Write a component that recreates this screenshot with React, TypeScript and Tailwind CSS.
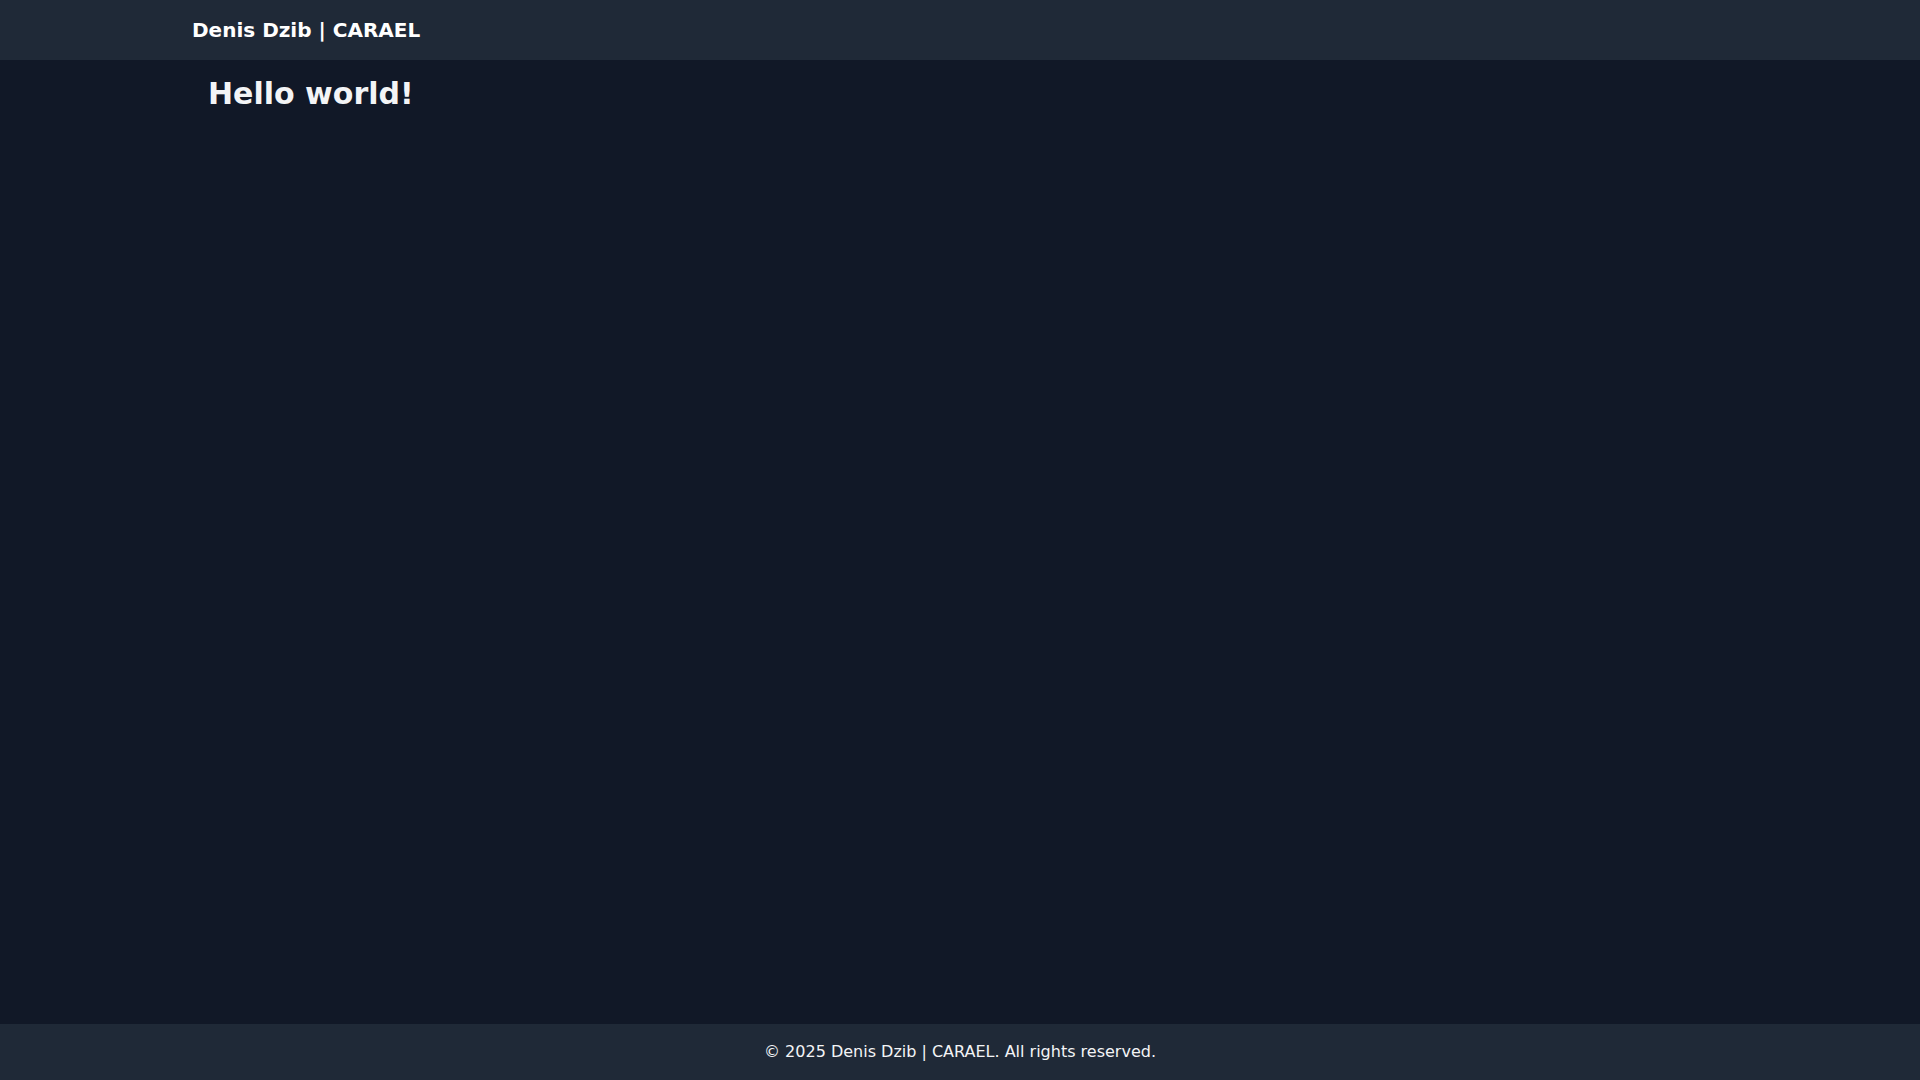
export default function App() {
  return (
    <div
      className="min-h-screen flex flex-col bg-[#111827] text-gray-100"
      style={{ fontFamily: '"DejaVu Sans", "Liberation Sans", sans-serif' }}
    >
      {/* Header */}
      <header className="bg-[#1f2937]">
        <div className="container mx-auto py-4">
          <span className="text-xl font-bold text-white">
            Denis Dzib | CARAEL
          </span>
        </div>
      </header>

      {/* Main */}
      <main className="flex-1 container mx-auto p-4">
        <h1 className="text-3xl font-bold">Hello world!</h1>
      </main>

      {/* Footer */}
      <footer className="bg-[#1f2937] py-4 text-center">
        <p className="text-base text-gray-100">
          © 2025 Denis Dzib | CARAEL. All rights reserved.
        </p>
      </footer>
    </div>
  );
}
